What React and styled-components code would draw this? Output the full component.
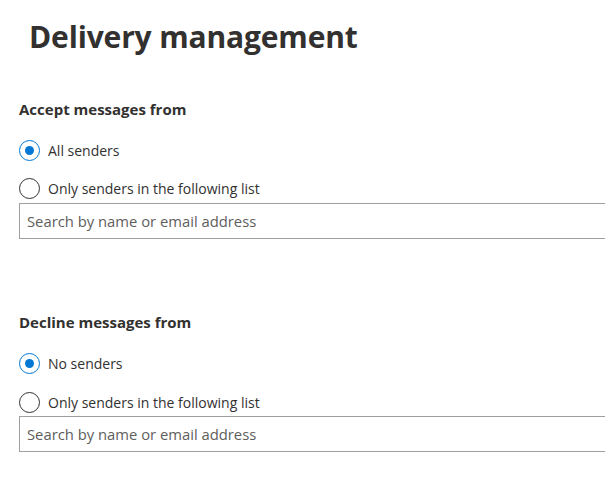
import React from "react";
import styled, { createGlobalStyle } from "styled-components";

const GlobalStyle = createGlobalStyle`
  html, body {
    margin: 0;
    padding: 0;
    background: #ffffff;
    overflow: hidden;
  }
  body {
    font-family: "Open Sans", "Noto Sans", Arial, sans-serif;
    color: #323130;
  }
`;

const Page = styled.div`
  width: 605px;
  height: 496px;
  overflow: hidden;
  padding: 19px 0 0 19px;
  box-sizing: border-box;
`;

const Title = styled.h1`
  margin: 0 0 44px 10px;
  font-size: 30px;
  line-height: 36px;
  font-weight: 700;
  color: #323130;
  letter-spacing: -0.15px;
`;

const Section = styled.section`
  display: flex;
  flex-direction: column;
  margin-bottom: ${(p) => p.$gap || 0}px;
`;

const Label = styled.div`
  font-size: 15px;
  line-height: 20px;
  font-weight: 700;
  color: #323130;
  margin-bottom: 21px;
`;

const Option = styled.label`
  display: flex;
  align-items: center;
  gap: 8px;
  height: 20px;
  font-size: 14px;
  color: #323130;
  margin-bottom: ${(p) => p.$gap}px;
  cursor: pointer;
`;

const Circle = styled.span`
  position: relative;
  width: 21px;
  height: 21px;
  box-sizing: border-box;
  border-radius: 50%;
  border: 1px solid ${(p) => (p.$checked ? "#0078d4" : "#323130")};
  flex-shrink: 0;

  &::after {
    content: "";
    display: ${(p) => (p.$checked ? "block" : "none")};
    position: absolute;
    top: 5px;
    left: 5px;
    width: 9px;
    height: 9px;
    border-radius: 50%;
    background: #0078d4;
  }
`;

const Search = styled.input`
  width: 620px;
  height: 36px;
  box-sizing: border-box;
  border: 1px solid #a19f9d;
  border-radius: 0;
  padding: 0 7px;
  font-family: inherit;
  font-size: 14.8px;
  color: #323130;
  outline: none;

  &::placeholder {
    color: #605e5c;
  }
`;

const Radio = ({ checked, children, gap }) => (
  <Option $gap={gap}>
    <Circle $checked={checked} />
    {children}
  </Option>
);

const App = () => {
  return (
    <Page>
      <GlobalStyle />
      <Title>Delivery management</Title>
      <Section $gap={73}>
        <Label>Accept messages from</Label>
        <Radio checked gap={18}>
          All senders
        </Radio>
        <Radio gap={5}>Only senders in the following list</Radio>
        <Search placeholder="Search by name or email address" />
      </Section>
      <Section>
        <Label>Decline messages from</Label>
        <Radio checked gap={19}>
          No senders
        </Radio>
        <Radio gap={4}>Only senders in the following list</Radio>
        <Search placeholder="Search by name or email address" />
      </Section>
    </Page>
  );
};

export default App;
